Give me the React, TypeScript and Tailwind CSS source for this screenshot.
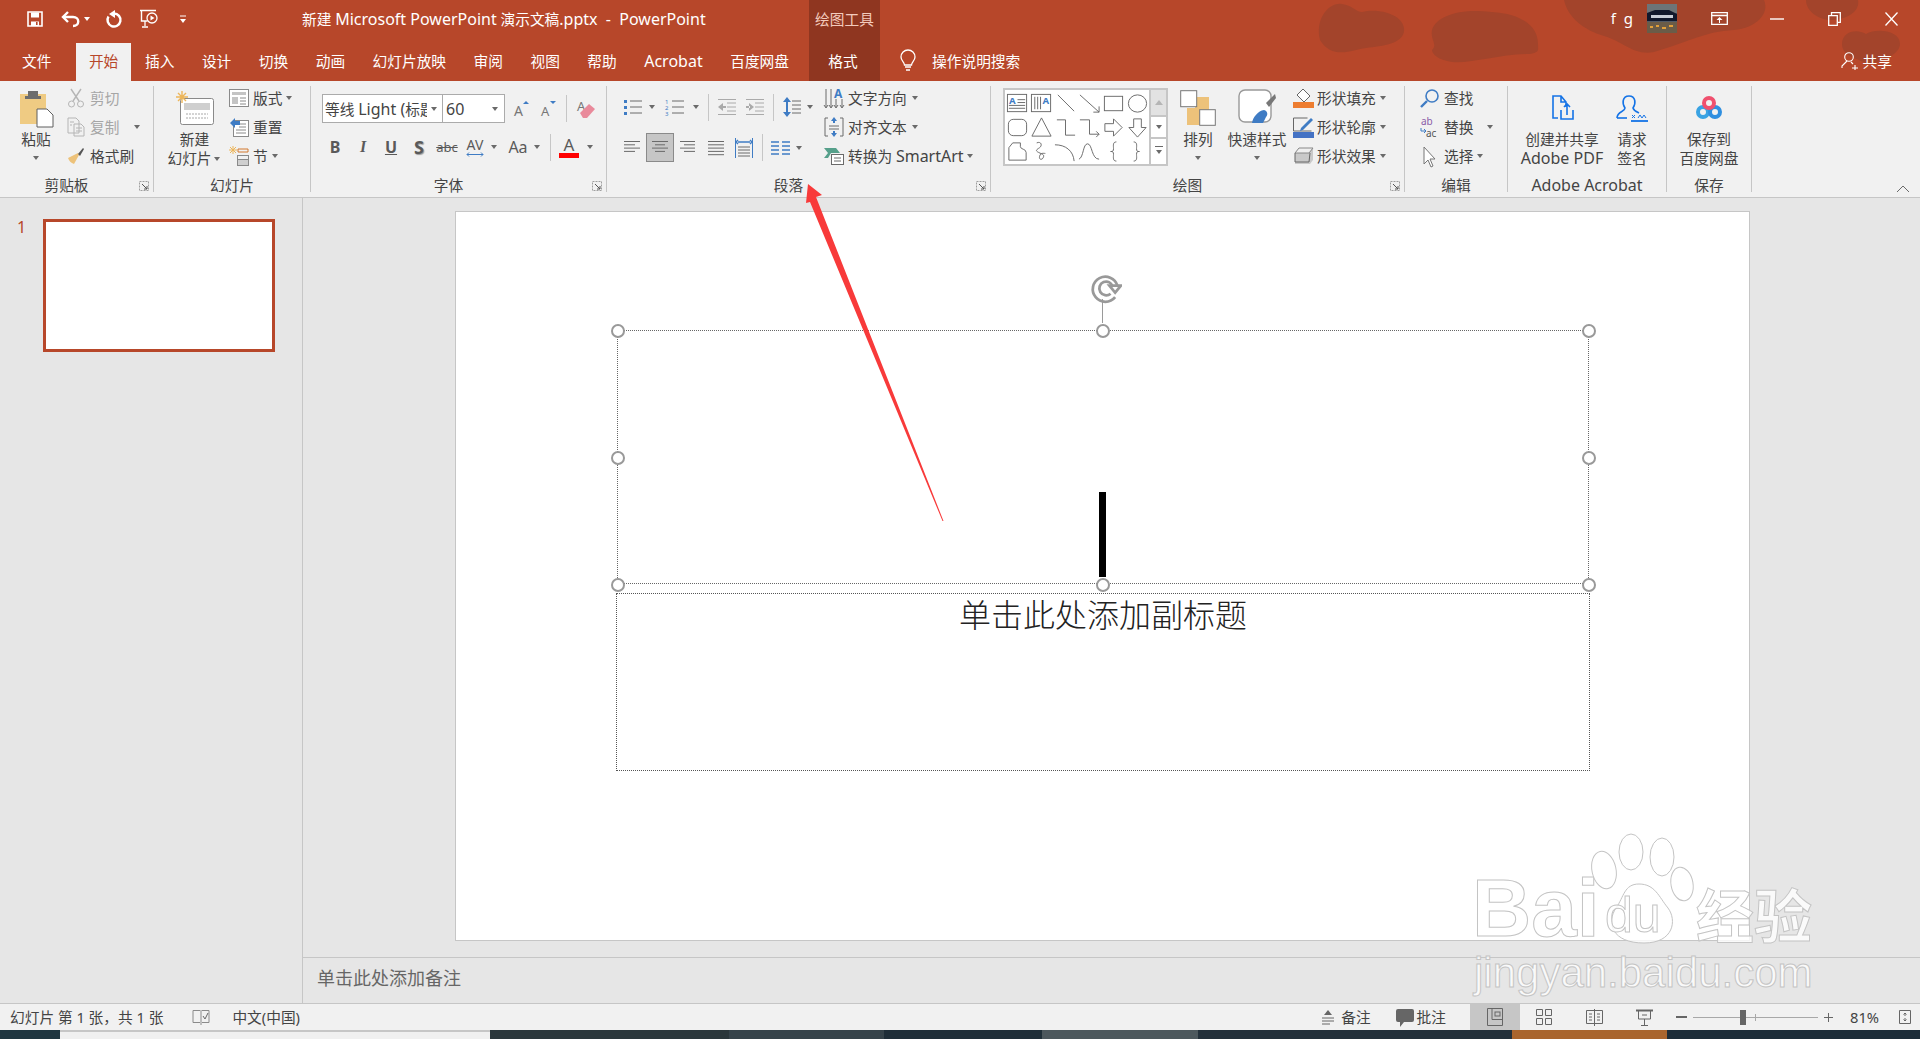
import type { ReactNode } from "react";

const STROKE = "#6a6a6a";
const BLUE = "#3f7cc4";

function Svg({ w, h, children, className = "" }: { w: number; h: number; children: ReactNode; className?: string }) {
  return (
    <svg width={w} height={h} viewBox={`0 0 ${w} ${h}`} fill="none" className={`overflow-visible ${className}`}>
      {children}
    </svg>
  );
}

function Latin({ children }: { children: ReactNode }) {
  return <span className="text-[16px]">{children}</span>;
}

function Caret({ className = "" }: { className?: string }) {
  return (
    <span className={`flex h-[10px] w-[10px] shrink-0 items-center justify-center ${className}`}>
      <span className="h-0 w-0 border-x-[3.5px] border-t-[4px] border-x-transparent border-t-[#6a6a6a]" />
    </span>
  );
}

function Launcher() {
  return (
    <span className="absolute bottom-[1px] right-[4px]">
      <Svg w={10} h={10}>
        <path d="M.5 9.5V.5h9v9z" stroke="#8a8a8a" strokeWidth=".8" strokeDasharray="2 1" />
        <path d="M3 3l5 5M8 5v3H5" stroke="#555" />
      </Svg>
    </span>
  );
}

function Group({ width, label, launcher, children }: { width: string; label: ReactNode; launcher?: boolean; children: ReactNode }) {
  return (
    <div className={`relative flex h-[106px] shrink-0 flex-col border-r border-[#c6c6c6] ${width}`}>
      <div className="flex h-[92px]">{children}</div>
      <div className={`text-center text-[14.7px] leading-[14px] text-[#444] ${launcher ? "pr-[20px]" : ""}`}>{label}</div>
      {launcher && <Launcher />}
    </div>
  );
}

function Large({ icon, lines, caret, width }: { icon: ReactNode; lines: ReactNode[]; caret?: "below" | "inline"; width: string }) {
  return (
    <div className={`flex shrink-0 flex-col items-center ${width}`}>
      <div className="flex h-[44px] items-center justify-center">{icon}</div>
      {lines.map((l, i) => (
        <div key={i} className="flex items-center whitespace-nowrap text-[14.7px] leading-[19px]">
          {l}
          {caret === "inline" && i === lines.length - 1 && <Caret />}
        </div>
      ))}
      {caret === "below" && lines.length === 1 && <Caret className="mt-[4px]" />}
    </div>
  );
}

function Row({ icon, label, caret, iconClass, caretClass, disabled }: { icon: ReactNode; label: ReactNode; caret?: boolean; iconClass: string; caretClass?: string; disabled?: boolean }) {
  return (
    <div className={`flex h-[24px] items-center whitespace-nowrap text-[14.7px] ${disabled ? "text-[#a6a6a6]" : ""}`}>
      <span className={`flex shrink-0 items-center justify-center ${iconClass}`}>{icon}</span>
      <span>{label}</span>
      {caret && <Caret className={caretClass ?? "ml-[1px]"} />}
    </div>
  );
}

function Col({ className, children }: { className: string; children: ReactNode }) {
  return <div className={`flex shrink-0 flex-col gap-[5px] ${className}`}>{children}</div>;
}

function Sep({ className }: { className: string }) {
  return <span className={`h-[27px] w-px shrink-0 bg-[#c6c6c6] ${className}`} />;
}

function Lines({ w, xs }: { w: number; xs: [number, number][] }) {
  return (
    <Svg w={w} h={16}>
      {xs.map(([a, b], i) => (
        <path key={i} d={`M${a} ${1.5 + i * 3.3}H${b}`} stroke={STROKE} />
      ))}
    </Svg>
  );
}

const TABS = ["插入", "设计", "切换", "动画", "幻灯片放映", "审阅", "视图", "帮助", "Acrobat", "百度网盘"];

const SHAPES: ReactNode[] = [
  <g key="a"><rect x="1.5" y="2.5" width="20" height="18" /><path d="M12 8h8M12 11h8M3 14h17M3 17h17" /><text x="3" y="12" fontSize="10" fontWeight="700" fill={BLUE} stroke="none">A</text></g>,
  <g key="b"><rect x="1.5" y="2.5" width="20" height="18" /><path d="M5 5v13M8 5v13M11 5v13" /><text x="13" y="12" fontSize="10" fontWeight="700" fill={BLUE} stroke="none">A</text></g>,
  <path key="c" d="M4 3l17 17" />,
  <path key="d" d="M2 3l20 18m-6 0h6v-6" />,
  <rect key="e" x="2.5" y="4.5" width="19" height="15" />,
  <ellipse key="f" cx="12" cy="12" rx="9.5" ry="9" />,
  <rect key="g" x="2.5" y="3.5" width="19" height="17" rx="5" />,
  <path key="h" d="M12 2L22 21H2z" />,
  <path key="i" d="M3 4h9v16h10" />,
  <path key="j" d="M2 4h10v15h10m-3-3l3 3-3 3" />,
  <path key="k" d="M3 8h9V3l9 9-9 9v-5H3z" />,
  <path key="l" d="M8 3h8v9h5l-9 10L3 12h5z" />,
  <path key="m" d="M7 3h8v4c0 3 6 2 6 6v8H3V8z" />,
  <path key="n" d="M7 3c5-2 6 3 3 5S5 11 9 13s6 2 5 5-5 3-4-1 4-3 6-3" />,
  <path key="o" d="M1 5c11 0 19 6 20 17" />,
  <path key="p" d="M1 20c5-2 4-16 9-16s4 16 12 16" />,
  <path key="q" d="M15 2c-4 0-3 4-3 7s-1 3-3 3c2 0 3 0 3 3s-1 7 3 7" />,
  <path key="r" d="M8 2c4 0 3 4 3 7s1 3 3 3c-2 0-3 0-3 3s1 7-3 7" />,
];

function Watermark() {
  const text = "text-[#ffffffcc] [-webkit-text-stroke:1px_#c4c4c4]";
  return (
    <div className="pointer-events-none absolute left-[1474px] top-[830px] h-[170px] w-[345px]">
      <div className={`absolute left-[-2px] top-[33px] font-['Liberation_Sans',sans-serif] text-[82px] font-bold leading-[90px] ${text}`}>Bai</div>
      <svg className="absolute left-[115px] top-[2px]" width="110" height="115" viewBox="0 0 110 115" fill="#ffffffcc" stroke="#c4c4c4">
        <ellipse cx="15" cy="38" rx="12" ry="19" transform="rotate(-12 15 38)" />
        <ellipse cx="42" cy="20" rx="12" ry="18" />
        <ellipse cx="73" cy="25" rx="12" ry="19" />
        <ellipse cx="93" cy="52" rx="11" ry="17" transform="rotate(-10 93 52)" />
        <path d="M50 52c16 0 20 13 29 24 9 12 6 35-24 35-32 0-38-20-28-35 8-11 8-24 23-24z" />
      </svg>
      <div className={`absolute left-[131px] top-[60px] font-['Liberation_Sans',sans-serif] text-[50px] leading-[50px] ${text}`}>du</div>
      <div className={`absolute left-[222px] top-[48px] font-['Noto_Sans_CJK_SC',sans-serif] text-[58px] font-bold leading-[70px] ${text}`}>经验</div>
      <div className={`absolute left-0 top-[118px] whitespace-nowrap font-['Liberation_Sans',sans-serif] text-[42px] leading-[50px] ${text}`}>jingyan.baidu.com</div>
    </div>
  );
}

export default function App() {
  return (
    <div className="relative flex h-[1039px] w-[1920px] flex-col overflow-hidden bg-[#e6e6e6] font-['Noto_Sans','Noto_Sans_CJK_SC',sans-serif] text-[#444]">
      {/* title bar and tabs share the theme background */}
      <header className="relative h-[81px] shrink-0 bg-[#b7472a] text-white">
        <svg className="absolute inset-0" width="1920" height="81" fill="#a3442b">
          <path d="M1320 40c-5-20 8-38 22-36 10 1 14 8 20 8 16-4 40 2 42 16 2 16-22 18-38 20-14 2-34 12-46-8z" />
          <path d="M1432 30c4-14 28-22 60-18 30 2 46 14 46 32 0 6 2 8-8 10-30 0-60 10-78 8-14-2-20-8-20-12 6-6-2-10 0-20z" />
          <path d="M1564 0h200c6 14-8 28-30 30-30 2-40 10-80 22-20 4-30-10-50-16-20-6-36-18-40-36z" />
          <path d="M1806 0h52c2 10-8 18-24 20-14 1-28-8-28-20z" />
          <path d="M1842 44c0-12 14-16 24-10 10-6 34-4 34 10 0 10-18 18-32 20-12-6-26-8-26-20z" />
        </svg>
        <div className="absolute left-[809px] top-0 flex h-[81px] w-[71px] justify-center bg-[#8f3620] pt-[9px] text-[14.7px] leading-[20px] text-[#f3cbbd]">
          绘图工具
        </div>

        <div className="relative flex h-[37px] items-center">
          <span className="ml-[27px]">
            <Svg w={16} h={16}>
              <path d="M1 1h14v14H1z" stroke="#fff" strokeWidth="1.6" />
              <path d="M4 1.5h8v5H4zM4 10.5h8V15H4z" fill="#fff" />
              <path d="M9 11h1.6v3H9z" fill="#b7472a" />
            </Svg>
          </span>
          <span className="ml-[18px]">
            <Svg w={19} h={16}>
              <path d="M7 1L2 6l5 5" stroke="#fff" strokeWidth="2.4" />
              <path d="M3 6h9c7 0 7 9 0 9" stroke="#fff" strokeWidth="2.4" />
            </Svg>
          </span>
          <Caret className="ml-[2px] [&>span]:border-t-white" />
          <span className="ml-[13px]">
            <Svg w={17} h={18}>
              <path d="M9 3.500a6.500 6.500 0 1 1-5.500 3" stroke="#fff" strokeWidth="2.4" />
              <path d="M10 0v8L4 4z" fill="#fff" />
            </Svg>
          </span>
          <span className="ml-[17px]">
            <Svg w={19} h={19}>
              <path d="M1 1.5h16M2.5 2v10h6" stroke="#fff" strokeWidth="1.4" />
              <circle cx="13" cy="9" r="5" stroke="#fff" strokeWidth="1.3" />
              <path d="M11.5 6.5v5l4-2.5z" fill="#fff" />
              <path d="M6 12v5M3 18h6" stroke="#fff" strokeWidth="1.3" />
            </Svg>
          </span>
          <span className="ml-[22px]">
            <Svg w={6} h={8}>
              <path d="M0 1h6" stroke="#fff" />
              <path d="M0 4h6L3 8z" fill="#fff" />
            </Svg>
          </span>
          <span className="ml-[116px] whitespace-pre text-[14.7px]">
            新建 <Latin>Microsoft PowerPoint</Latin> 演示文稿<Latin>.pptx  -  PowerPoint</Latin>
          </span>
          <span className="ml-auto text-[15px] tracking-[2px]">f g</span>
          <span className="ml-[12px]">
            <Svg w={30} h={29}>
              <rect width="30" height="29" fill="#525a66" />
              <rect y="0" width="30" height="9" fill="#6d7478" />
              <path d="M0 9l8-3h14l8 4v7H0z" fill="#10182c" />
              <path d="M4 11h22v3H4z" fill="#c6ccd6" />
              <rect y="18" width="30" height="11" fill="#6a5c48" />
              <path d="M3 22h3v2H3zM9 21h3v2H9zM15 23h4v2h-4zM22 21h4v2h-4z" fill="#e2a03a" />
            </Svg>
          </span>
          <span className="ml-[34px]">
            <Svg w={17} h={13}>
              <path d="M.7.7h15.6v11.6H.7zM1 3.5h15" stroke="#fff" strokeWidth="1.3" />
              <path d="M8.5 5l-3 3h6zM8 8h1v3H8z" fill="#fff" />
            </Svg>
          </span>
          <span className="ml-[42px]">
            <Svg w={14} h={2}>
              <path d="M0 1h14" stroke="#fff" strokeWidth="1.4" />
            </Svg>
          </span>
          <span className="ml-[44px]">
            <Svg w={13} h={14}>
              <path d="M.7 3.7h8.6v9.6H.7zM3.5 3V.7h8.8v9.6H10" stroke="#fff" strokeWidth="1.3" />
            </Svg>
          </span>
          <span className="mr-[22px] ml-[44px]">
            <Svg w={13} h={14}>
              <path d="M.5.5l12 13M12.5.5l-12 13" stroke="#fff" strokeWidth="1.3" />
            </Svg>
          </span>
        </div>

        <nav className="relative flex h-[44px] items-end pl-[8.5px] text-[14.7px]">
          <div className="flex h-[38px] items-center px-[13.5px] pb-[2px]">文件</div>
          <div className="ml-[11px] flex h-[38px] items-center bg-[#f1f1f1] px-[13px] pb-[2px] text-[#b7472a]">开始</div>
          {TABS.map((t) => (
            <div key={t} className="flex h-[38px] items-center px-[13.75px] pb-[2px]">
              {t === "Acrobat" ? <Latin>{t}</Latin> : t}
            </div>
          ))}
          <div className="ml-[12px] flex h-[38px] items-center px-[13.5px] pb-[2px]">格式</div>
          <span className="ml-[29px] flex h-[38px] items-center pb-[2px]">
            <Svg w={16} h={21}>
              <path d="M4.5 14c0-3-3.5-4-3.5-8a7 7 0 0 1 14 0c0 4-3.500 5-3.500 8z" stroke="#fff" strokeWidth="1.3" />
              <path d="M5 16h6M6 19h4" stroke="#fff" strokeWidth="1.6" />
            </Svg>
          </span>
          <div className="ml-[16px] flex h-[38px] items-center pb-[2px]">操作说明搜索</div>
          <div className="ml-auto mr-[28px] flex h-[38px] items-center gap-[5px] pb-[2px]">
            <Svg w={17} h={18}>
              <circle cx="8" cy="5" r="4.3" stroke="#fff" strokeWidth="1.1" />
              <path d="M6 9l-5 5v2M10 10l2 2M11 16h6M14 13v5" stroke="#fff" strokeWidth="1.1" />
            </Svg>
            共享
          </div>
        </nav>
      </header>

      {/* ribbon */}
      <section className="relative flex h-[117px] shrink-0 border-b border-[#c6c6c6] bg-[#f1f1f1] pt-[5px]">
        <Group width="w-[154px]" label="剪贴板" launcher>
          <Large
            width="ml-[18px] w-[36px]"
            lines={["粘贴"]}
            caret="below"
            icon={
              <Svg w={36} h={40}>
                <path d="M2 6h26v30H2z" fill="#efcb83" />
                <path d="M10 3h10v5h3v3H7V8h3z" fill="#6d6d6d" />
                <path d="M19 21h10l6 6v12H19z" fill="#fff" stroke="#5f5f5f" />
              </Svg>
            }
          />
          <Col className="ml-[13px]">
            <Row
              disabled
              iconClass="mr-[5px] w-[18px]"
              label="剪切"
              icon={
                <Svg w={18} h={20}>
                  <path d="M4 1l8 12M14 1L6 13" stroke="#b5b5b5" strokeWidth="1.4" />
                  <circle cx="4.5" cy="16" r="3" stroke="#b5b5b5" />
                  <circle cx="13.5" cy="16" r="3" stroke="#b5b5b5" />
                </Svg>
              }
            />
            <Row
              disabled
              iconClass="mr-[5px] w-[18px]"
              label="复制"
              caret
              caretClass="ml-[13px]"
              icon={
                <Svg w={18} h={20}>
                  <path d="M1 1h8l3 3v12H1zM7 7h7l3 3v9H7z" fill="#f1f1f1" stroke="#b5b5b5" />
                  <path d="M9 11h6M9 14h6M3 5h4M3 8h2" stroke="#b5b5b5" />
                </Svg>
              }
            />
            <Row
              iconClass="mr-[5px] w-[18px]"
              label="格式刷"
              icon={
                <Svg w={18} h={18}>
                  <path d="M11 6l-10 5c1 3 3 5 6 6l5-9z" fill="#edc27a" />
                  <path d="M11 7l5-6 1 1-4 7z" fill="#555" />
                </Svg>
              }
            />
          </Col>
        </Group>

        <Group width="w-[157px]" label="幻灯片">
          <Large
            width="ml-[13px] w-[55px]"
            lines={["新建", "幻灯片"]}
            caret="inline"
            icon={
              <Svg w={38} h={34}>
                <rect x="4.5" y="7.5" width="33" height="26" rx="2" fill="#fff" stroke="#8a8a8a" />
                <path d="M8 12h26v7H8z" fill="#cfcfcf" />
                <path d="M10 23h22M10 27h22" stroke="#a8a8a8" strokeDasharray="2 1" />
                <path d="M6 0v12M0 6h12M2 2l8 8M10 2l-8 8" stroke="#edb65a" strokeWidth="1.4" />
              </Svg>
            }
          />
          <Col className="ml-[7px]">
            <Row
              iconClass="mr-[4px] w-[20px]"
              label="版式"
              caret
              caretClass="ml-[2px]"
              icon={
                <Svg w={20} h={18}>
                  <rect x=".5" y=".5" width="19" height="17" fill="#fff" stroke="#8a8a8a" />
                  <path d="M3 3h14v3H3zM3 8h6v7H3z" fill="#c4c4c4" />
                  <path d="M11 9h6M11 12h6M11 15h6" stroke="#8a8a8a" />
                </Svg>
              }
            />
            <Row
              iconClass="mr-[4px] w-[20px]"
              label="重置"
              icon={
                <Svg w={20} h={20}>
                  <rect x="4.5" y="3.5" width="15" height="16" fill="#fff" stroke="#8a8a8a" />
                  <path d="M10 7h7M10 10h7M7 13h10M7 16h10" stroke="#8a8a8a" />
                  <path d="M1 6l5-5v3h5v4H6v3z" fill={BLUE} />
                </Svg>
              }
            />
            <Row
              iconClass="mr-[4px] w-[20px]"
              label="节"
              caret
              caretClass="ml-[2px]"
              icon={
                <Svg w={20} h={20}>
                  <path d="M4 0v8M0 4h8M1 1l6 6M7 1L1 7" stroke="#edb65a" />
                  <path d="M9 3h10v3H9z" stroke="#d2792f" />
                  <rect x="8.5" y="9.5" width="11" height="4" stroke="#8a8a8a" />
                  <rect x="8.5" y="13.5" width="11" height="6" fill="#cfcfcf" stroke="#8a8a8a" />
                </Svg>
              }
            />
          </Col>
        </Group>

        <Group width="w-[296px]" label="字体" launcher>
          <div className="flex flex-col pt-[8px]">
            <div className="flex h-[29px] items-center pl-[11px]">
              <div className="flex h-[29px] w-[121px] items-center whitespace-nowrap border border-[#ababab] bg-white pl-[2px] text-[14.7px]">
                <span className="w-[102px] overflow-hidden">
                  等线 <Latin>Light (</Latin>标题
                </span>
                <Caret className="ml-[2px]" />
              </div>
              <div className="flex h-[29px] w-[62px] items-center border border-l-0 border-[#ababab] bg-white pl-[3px] text-[16px]">
                60
                <Caret className="ml-auto mr-[4px]" />
              </div>
              <span className="ml-[9px] w-[15px]">
                <Svg w={15} h={18}>
                  <text x="0" y="16" fontSize="14" fill="#777">A</text>
                  <path d="M9 4l3-3 3 3z" fill={BLUE} />
                </Svg>
              </span>
              <span className="ml-[12px] w-[15px]">
                <Svg w={15} h={18}>
                  <text x="0" y="16" fontSize="13" fill="#777">A</text>
                  <path d="M9 1l3 3 3-3z" fill={BLUE} />
                </Svg>
              </span>
              <Sep className="ml-[10px]" />
              <span className="ml-[10px]">
                <Svg w={18} h={20}>
                  <text x="0" y="12" fontSize="13" fill="#777">A</text>
                  <path d="M3 14l9-9 6 5-8 9H6z" fill="#e98a9b" />
                </Svg>
              </span>
            </div>
            <div className="mt-[12px] flex h-[24px] items-center pl-[10px] text-[16px] text-[#5a5a5a]">
              <span className="w-[28px] text-center font-bold leading-none">B</span>
              <span className="w-[28px] text-center font-['Liberation_Serif',serif] font-bold italic leading-none">I</span>
              <span className="w-[28px] text-center font-bold leading-none underline">U</span>
              <span className="w-[28px] text-center text-[18px] font-bold leading-none [text-shadow:1px_1px_1px_#999]">S</span>
              <span className="w-[28px] text-center text-[13px] leading-none line-through">abc</span>
              <span className="flex w-[28px] flex-col items-center text-[14px] leading-[14px]">
                AV
                <Svg w={18} h={5}>
                  <path d="M1 2.5h16M3 .5l-2 2 2 2M15 .5l2 2-2 2" stroke={BLUE} />
                </Svg>
              </span>
              <Caret />
              <span className="ml-[5px] w-[28px] text-center leading-none">Aa</span>
              <Caret />
              <Sep className="ml-[8px]" />
              <span className="ml-[8px] flex w-[20px] flex-col items-center text-[17px] leading-[16px]">
                A<span className="h-[5px] w-[20px] bg-[#f00]" />
              </span>
              <Caret className="ml-[6px]" />
            </div>
          </div>
        </Group>

        <Group width="w-[384px]" label="段落" launcher>
          <div className="flex w-[217px] shrink-0 flex-col pt-[6px]">
            <div className="flex h-[30px] items-center pl-[16px]">
              <span className="w-[19px]">
                <Svg w={19} h={18}>
                  <path d="M7 3h12M7 9h12M7 15h12" stroke={STROKE} />
                  <path d="M1 2h3v3H1zM1 8h3v3H1zM1 14h3v3H1z" fill={BLUE} />
                </Svg>
              </span>
              <Caret className="ml-[5px]" />
              <span className="ml-[8px] w-[19px]">
                <Svg w={19} h={18}>
                  <path d="M7 3h12M7 9h12M7 15h12" stroke={STROKE} />
                  <text x="0" y="6" fontSize="6" fill={BLUE}>1</text>
                  <text x="0" y="12" fontSize="6" fill={BLUE}>2</text>
                  <text x="0" y="18" fontSize="6" fill={BLUE}>3</text>
                </Svg>
              </span>
              <Caret className="ml-[7px]" />
              <Sep className="ml-[7px]" />
              <span className="ml-[9px] w-[18px]">
                <Svg w={18} h={18}>
                  <path d="M0 1.5h18M9 5h9M9 9h9M9 13h9M0 16.5h18" stroke="#aaa" />
                  <path d="M0 9l5-4v8zM4 8h4v2H4z" fill="#aaa" />
                </Svg>
              </span>
              <span className="ml-[10px] w-[18px]">
                <Svg w={18} h={18}>
                  <path d="M0 1.5h18M9 5h9M9 9h9M9 13h9M0 16.5h18" stroke="#aaa" />
                  <path d="M8 9L3 5v8zM0 8h4v2H0z" fill="#aaa" />
                </Svg>
              </span>
              <Sep className="ml-[9px]" />
              <span className="ml-[9px] w-[18px]">
                <Svg w={18} h={20}>
                  <path d="M9 4h9M9 8h9M9 12h9M9 16h9" stroke={STROKE} />
                  <path d="M4 0l4 5H5v10h3l-4 5-4-5h3V5H0z" fill={BLUE} />
                </Svg>
              </span>
              <Caret className="ml-[4px]" />
            </div>
            <div className="mt-[11px] flex h-[29px] items-center pl-[17px]">
              <span className="w-[16px]">
                <Lines w={16} xs={[[0, 16], [0, 11], [0, 16], [0, 11]]} />
              </span>
              <span className="ml-[6px] flex h-[29px] w-[28px] items-center justify-center border border-[#8a8a8a] bg-[#c6c6c6]">
                <Lines w={16} xs={[[0, 16], [3, 13], [0, 16], [3, 13]]} />
              </span>
              <span className="ml-[6px] w-[15px]">
                <Lines w={15} xs={[[0, 15], [4, 15], [0, 15], [4, 15]]} />
              </span>
              <span className="ml-[13px] w-[16px]">
                <Lines w={16} xs={[[0, 16], [0, 16], [0, 16], [0, 16], [0, 16]]} />
              </span>
              <span className="ml-[11px] w-[18px]">
                <Svg w={18} h={20}>
                  <path d="M.5 0v20M17.5 0v20" stroke={BLUE} />
                  <path d="M3 4h12M3 2l-2 2 2 2M15 2l2 2-2 2" stroke={BLUE} strokeWidth="1.4" />
                  <path d="M3 9h12M3 12h12M3 15h12M3 18h12" stroke={STROKE} />
                </Svg>
              </span>
              <Sep className="ml-[9px]" />
              <span className="ml-[8px] w-[19px]">
                <Svg w={19} h={16}>
                  <path d="M0 2h8M11 2h8M0 6h8M11 6h8M0 10h8M11 10h8M0 14h8M11 14h8" stroke={BLUE} strokeWidth="1.3" />
                </Svg>
              </span>
              <Caret className="ml-[4px]" />
            </div>
          </div>
          <Col className="">
            <Row
              iconClass="mr-[4px] w-[20px]"
              label="文字方向"
              caret
              caretClass="ml-[3px]"
              icon={
                <Svg w={20} h={22}>
                  <path d="M2 2v18M7 2v18M12 12v8M18 12v8" stroke={STROKE} />
                  <path d="M0 18l2 3 2-3M5 18l2 3 2-3M10 18l2 3 2-3M16 18l2 3 2-3" stroke={STROKE} />
                  <text x="10" y="11" fontSize="12" fontWeight="700" fill={BLUE}>A</text>
                </Svg>
              }
            />
            <Row
              iconClass="mr-[4px] w-[20px]"
              label="对齐文本"
              caret
              caretClass="ml-[3px]"
              icon={
                <Svg w={20} h={22}>
                  <path d="M4 2H1v18h3M16 2h3v18h-3" stroke={STROKE} />
                  <path d="M5 10h10M5 13h10" stroke={STROKE} />
                  <path d="M10 1l3 4h-2v2H9V5H7zM10 21l3-4h-2v-2H9v2H7z" fill={BLUE} />
                </Svg>
              }
            />
            <Row
              iconClass="mr-[4px] w-[20px]"
              label={
                <>
                  转换为 <Latin>SmartArt</Latin>
                </>
              }
              caret
              caretClass="ml-[1px]"
              icon={
                <Svg w={20} h={18}>
                  <path d="M0 1h12l4 5H4zM0 11h4l3-5H4z" fill="#56a08b" />
                  <rect x="7.5" y="7.5" width="12" height="10" fill="#fff" stroke={STROKE} />
                  <path d="M10 11h7M10 14h7" stroke={STROKE} />
                </Svg>
              }
            />
          </Col>
        </Group>

        <Group width="w-[414px]" label="绘图" launcher>
          <div className="ml-[12px] mt-[2px] flex h-[78px] w-[165px] shrink-0 border-2 border-[#c6c6c6] bg-white">
            <div className="grid w-[144px] grid-cols-6 items-center justify-items-center py-[1px]">
              {SHAPES.map((s, i) => (
                <svg key={i} width="23" height="23" viewBox="0 0 24 24" fill="none" stroke={STROKE} className="overflow-visible">
                  {s}
                </svg>
              ))}
            </div>
            <div className="flex flex-1 flex-col border-l-2 border-[#c6c6c6]">
              <span className="flex h-[25px] items-center justify-center bg-[#e2e2e2]">
                <span className="h-0 w-0 border-x-[4px] border-b-[5px] border-x-transparent border-b-[#b5b5b5]" />
              </span>
              <span className="flex h-[24px] items-center justify-center border-y-2 border-[#c6c6c6]">
                <Caret />
              </span>
              <span className="flex flex-1 flex-col items-center justify-center">
                <span className="h-px w-[8px] bg-[#6a6a6a]" />
                <Caret className="h-[8px]" />
              </span>
            </div>
          </div>
          <Large
            width="ml-[12px] w-[36px]"
            lines={["排列"]}
            caret="below"
            icon={
              <Svg w={36} h={36}>
                <path d="M15 7h14v14H15zM7 18h14v17H7z" fill="#edc27a" />
                <rect x=".7" y=".7" width="16" height="16" fill="#fff" stroke="#777" />
                <rect x="19.7" y="19.7" width="15.6" height="15.6" fill="#fff" stroke="#777" />
              </Svg>
            }
          />
          <Large
            width="ml-[11px] w-[60px]"
            lines={["快速样式"]}
            caret="below"
            icon={
              <Svg w={38} h={38}>
                <rect x="1" y="1" width="32" height="32" rx="6" fill="#fff" stroke="#999" strokeWidth="1.4" />
                <path d="M28 14l9-9 1 4-7 9z" fill="#777" />
                <path d="M14 34c1-6 6-12 12-13 4 1 4 5 2 7l-3 6z" fill={BLUE} />
              </Svg>
            }
          />
          <Col className="ml-[6px]">
            <Row
              iconClass="mr-[3px] w-[21px]"
              label="形状填充"
              caret
              caretClass="ml-[2px]"
              icon={
                <Svg w={21} h={20}>
                  <path d="M10 1l7 7-6 6-7-7z" fill="#fff" stroke="#666" />
                  <path d="M0 14h21v6H0z" fill="#ed7d31" />
                </Svg>
              }
            />
            <Row
              iconClass="mr-[3px] w-[21px]"
              label="形状轮廓"
              caret
              caretClass="ml-[2px]"
              icon={
                <Svg w={21} h={21}>
                  <path d="M.5 1h14M.5 1v13h18" stroke="#666" />
                  <path d="M8 11L18 1l2 2-10 10-3 1z" fill={BLUE} />
                  <path d="M0 15h21v6H0z" fill="#4472c4" />
                </Svg>
              }
            />
            <Row
              iconClass="mr-[3px] w-[21px]"
              label="形状效果"
              caret
              caretClass="ml-[2px]"
              icon={
                <Svg w={20} h={18}>
                  <path d="M5 1h14v12l-3 4H1V6z" fill="#c9c9c9" />
                  <path d="M5 1h14l-4 5H1z" fill="#efefef" stroke="#888" />
                  <path d="M1 6v9h14l1-9" stroke="#666" />
                </Svg>
              }
            />
          </Col>
        </Group>

        <Group width="w-[103px]" label="编辑">
          <Col className="ml-[15px]">
            <Row
              iconClass="mr-[5px] w-[19px]"
              label="查找"
              icon={
                <Svg w={19} h={19}>
                  <circle cx="12" cy="7" r="6" stroke={BLUE} strokeWidth="1.6" />
                  <path d="M7 12l-6 6" stroke={BLUE} strokeWidth="2.4" />
                </Svg>
              }
            />
            <Row
              iconClass="mr-[5px] w-[19px]"
              label="替换"
              caret
              caretClass="ml-[12px]"
              icon={
                <Svg w={19} h={22}>
                  <text x="1" y="9" fontSize="10" fill="#8a5ca8">ab</text>
                  <text x="6" y="21" fontSize="10" fill="#555">ac</text>
                  <path d="M1 12v3h4M4 13l2 2-2 2" stroke={BLUE} />
                </Svg>
              }
            />
            <Row
              iconClass="mr-[5px] w-[19px]"
              label="选择"
              caret
              caretClass="ml-[2px]"
              icon={
                <Svg w={13} h={21}>
                  <path d="M1 1l11 12H7l3 7-2 1-3-7-4 4z" fill="#fff" stroke="#777" />
                </Svg>
              }
            />
          </Col>
        </Group>

        <Group width="w-[159px]" label={<Latin>Adobe Acrobat</Latin>}>
          <Large
            width="ml-[13px] w-[82px]"
            lines={["创建并共享", <Latin key="pdf">Adobe PDF</Latin>]}
            icon={
              <Svg w={23} h={26}>
                <path d="M7 23H2V1h8l5 6v5M10 1v6h5" stroke="#1473e6" strokeWidth="1.6" />
                <path d="M10 15v9h12v-9M16 20V9M13 12l3-3 3 3" stroke="#1473e6" strokeWidth="1.6" />
              </Svg>
            }
          />
          <Large
            width="ml-[9px] w-[40px]"
            lines={["请求", "签名"]}
            icon={
              <Svg w={32} h={28}>
                <path d="M1 24c0-7 8-6 8-10-3-4-3-12 4-12s7 8 4 12c1 3 4 4 6 5" stroke="#1473e6" strokeWidth="1.6" />
                <path d="M1 24h10" stroke="#1473e6" strokeWidth="1.6" />
                <path d="M16 21l3 3m0-3l-3 3M22 24l2-3 2 3 2-3 2 3" stroke="#1473e6" />
                <path d="M15 27h17" stroke="#1473e6" strokeWidth="1.8" />
              </Svg>
            }
          />
        </Group>

        <Group width="w-[85px]" label="保存">
          <div className="flex w-full justify-center">
            <Large
              width="w-[60px]"
              lines={["保存到", "百度网盘"]}
              icon={
                <Svg w={26} h={24}>
                  <circle cx="7" cy="16" r="5" stroke="#3aa3e3" strokeWidth="4" />
                  <circle cx="19" cy="16" r="5" stroke="#2f8fe0" strokeWidth="4" />
                  <circle cx="13" cy="7" r="5" stroke="#f0506e" strokeWidth="4" />
                </Svg>
              }
            />
          </div>
        </Group>

        <span className="absolute bottom-[4px] right-[10px]">
          <Svg w={14} h={8}>
            <path d="M1 7l6-6 6 6" stroke={STROKE} />
          </Svg>
        </span>
      </section>

      <main className="flex min-h-0 flex-1">
        <aside className="relative w-[303px] shrink-0 border-r border-[#c6c6c6]">
          <div className="flex pl-[17px] pt-[21px]">
            <span className="w-[26px] text-[16px] leading-[16px] text-[#b7472a]">1</span>
            <div className="h-[133px] w-[232px] border-[3px] border-[#b7472a] bg-white" />
          </div>
        </aside>

        <div className="flex min-w-0 flex-1 flex-col">
          <div className="flex-1 pl-[152px] pt-[13px]">
            <div className="relative h-[730px] w-[1295px] border border-[#c6c6c6] bg-white">
              {/* placeholders sit on the slide canvas at their own coordinates */}
              <div className="absolute left-[160px] top-[381px] h-[178px] w-[974px] border border-dotted border-[#555]">
                <div className="absolute left-0 top-[1px] w-full text-center text-[32px] font-light leading-[40px] text-[#222]">单击此处添加副标题</div>
              </div>
              <div className="absolute left-[161px] top-[118px] h-[254px] w-[972px] border border-dotted border-[#666]" />
              <div className="absolute left-[646px] top-[87px] h-[24px] w-px bg-[#9a9a9a]" />
              <svg className="absolute left-[634px] top-[60px]" width="32" height="32" viewBox="0 0 28 28" fill="none" stroke="#999" strokeWidth="2.4">
                <path d="M22 22a11 11 0 1 1 2-10" />
                <path d="M18 19a6 6 0 1 1 2-6" />
                <path d="M17 12h10l-5 6z" fill="#fff" />
              </svg>
              <div className="absolute left-[643px] top-[280px] h-[85px] w-[7px] bg-black" />
              {[
                "left-[155px] top-[112px]",
                "left-[640px] top-[112px]",
                "left-[1126px] top-[112px]",
                "left-[155px] top-[239px]",
                "left-[1126px] top-[239px]",
                "left-[155px] top-[366px]",
                "left-[640px] top-[366px]",
                "left-[1126px] top-[366px]",
              ].map((p) => (
                <span key={p} className={`absolute h-[14px] w-[14px] rounded-full border-[2.5px] border-[#999] bg-white ${p}`} />
              ))}
            </div>
          </div>
          <div className="h-[46px] shrink-0 border-t border-[#c6c6c6] pl-[14px] pt-[8px] text-[18px] leading-[24px] text-[#666]">单击此处添加备注</div>
        </div>
      </main>

      {/* status bar */}
      <footer className="flex h-[27px] shrink-0 items-center border-t border-[#c6c6c6] bg-[#f1f1f1] text-[14.7px]">
        <span className="ml-[10px] whitespace-nowrap">幻灯片 第 1 张，共 1 张</span>
        <span className="ml-[29px]">
          <Svg w={18} h={16}>
            <path d="M8 1.5H1v12h7M10 1.5h7v12h-7M9 1v15" stroke="#8a8a8a" />
            <path d="M11 7l2 3 3-6" stroke="#666" />
          </Svg>
        </span>
        <span className="ml-[22px] whitespace-nowrap">中文(中国)</span>

        <span className="ml-auto">
          <Svg w={14} h={14}>
            <path d="M7 0l4 5H3z" fill="#666" />
            <path d="M1 8h12M1 11h12M1 14h8" stroke="#666" />
          </Svg>
        </span>
        <span className="ml-[6px]">备注</span>
        <span className="ml-[25px]">
          <Svg w={18} h={19}>
            <path d="M2 1h14a2 2 0 0 1 2 2v9a2 2 0 0 1-2 2H8l-4 5v-5H2a2 2 0 0 1-2-2V3a2 2 0 0 1 2-2z" fill="#666" />
          </Svg>
        </span>
        <span className="ml-[3px]">批注</span>
        <span className="ml-[24px] flex h-full w-[50px] items-center justify-center bg-[#c6c6c6]">
          <Svg w={16} h={18}>
            <path d="M.5.5h15v17H.5zM5 .5v11h10.5" stroke="#666" />
            <rect x="8" y="4" width="5" height="4" stroke="#666" />
          </Svg>
        </span>
        <span className="ml-[16px]">
          <Svg w={16} h={16}>
            <path d="M.5.5h6v6h-6zM9.5.5h6v6h-6zM.5 9.5h6v6h-6zM9.5 9.5h6v6h-6z" stroke="#666" />
          </Svg>
        </span>
        <span className="ml-[34px]">
          <Svg w={17} h={17}>
            <path d="M.5 1.5h16v13H.5zM8.5 0v17M3 5h3M3 8h3M3 11h3M11 5h3M11 8h3M11 11h3" stroke="#666" />
          </Svg>
        </span>
        <span className="ml-[33px]">
          <Svg w={17} h={17}>
            <path d="M0 1.5h17" stroke="#666" strokeWidth="2" />
            <path d="M2.5 2v8h12V2M8.5 10v6M5 16.5h7M6 6h5" stroke="#666" />
          </Svg>
        </span>
        <span className="ml-[23px] h-[1.5px] w-[11px] bg-[#666]" />
        <span className="relative ml-[6px] h-px w-[125px] bg-[#a8a8a8]">
          <span className="absolute left-[47px] top-[-7px] h-[15px] w-[6px] bg-[#666]" />
          <span className="absolute left-[62px] top-[-3px] h-[7px] w-px bg-[#a8a8a8]" />
        </span>
        <Svg w={9} h={9} className="ml-[6px]">
          <path d="M0 4.5h9M4.5 0v9" stroke="#666" />
        </Svg>
        <span className="ml-[17px] whitespace-nowrap">81%</span>
        <span className="ml-[20px] mr-[9px]">
          <Svg w={12} h={14}>
            <path d="M.5.5h11v13H.5zM6 3v3M4.5 4.5L6 3l1.500 1.500M6 11V8M4.500 9.500L6 11l1.500-1.500" stroke="#666" />
          </Svg>
        </span>
      </footer>

      {/* the taskbar peeking through at the bottom of the capture */}
      <div className="flex h-[9px] shrink-0">
        <span className="w-[60px] bg-[#1f3640]" />
        <span className="w-[430px] border-t-2 border-[#c6c6c6] bg-[#f0f0f0]" />
        <span className="w-[239px] bg-[#2b373b]" />
        <span className="w-[155px] bg-[#36434a]" />
        <span className="w-[158px] bg-[#1f2e38]" />
        <span className="w-[156px] bg-[#4d585d]" />
        <span className="w-[314px] bg-[#23303a]" />
        <span className="w-[155px] bg-[#a9652e]" />
        <span className="flex-1 bg-[#1c2c38]" />
      </div>

      {/* arrow drawn over the screenshot */}
      <svg className="pointer-events-none absolute left-[790px] top-[170px]" width="170" height="360">
        <path d="M18 14l14 11-6 2 127.500 324h-1L20 32l-4 1z" fill="#f83a3a" />
      </svg>

      <Watermark />
    </div>
  );
}
